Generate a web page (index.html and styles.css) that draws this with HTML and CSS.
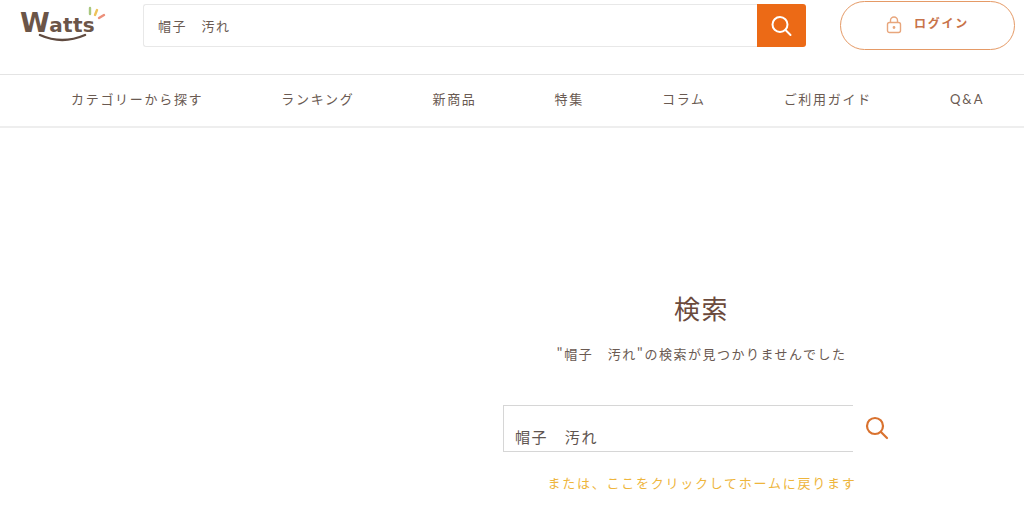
FILE: index.html
```html
<!DOCTYPE html>
<html lang="ja">
<head>
  <meta charset="UTF-8">
  <meta name="viewport" content="width=device-width, initial-scale=1.0">
  <title>検索 | Watts</title>
  <link rel="stylesheet" href="styles.css">
</head>
<body>

  <header class="header">
    <a class="logo" href="#">
      <span class="logo-text"><span class="logo-w">W</span>atts</span>
      <svg class="logo-marks" width="90" height="44" viewBox="0 0 90 44" fill="none" stroke-linecap="round">
        <path d="M20 34 Q42 44 65 34" stroke="#5f4a3f" stroke-width="2.4"/>
        <path d="M70 7 L70 13" stroke="#a9c77e" stroke-width="2.4"/>
        <path d="M77 9 L75 14" stroke="#eec35a" stroke-width="2.4"/>
        <path d="M84 14 L79 17" stroke="#ec8f7a" stroke-width="2.4"/>
      </svg>
    </a>
    <form class="search-bar">
      <input class="search-bar-input" type="text" value="帽子　汚れ">
      <button class="search-bar-btn" type="button">
        <svg width="22" height="22" viewBox="0 0 22 22" fill="none" stroke="#fff" stroke-width="2" stroke-linecap="round">
          <circle cx="9" cy="9.500" r="7.500"/>
          <path d="M14.500 15 L19.500 20"/>
        </svg>
      </button>
    </form>
    <a class="login" href="#">
      <svg class="login-icon" width="16" height="18" viewBox="0 0 16 18" fill="none" stroke="#e8a67c" stroke-width="1.400">
        <rect x="1.500" y="6.500" width="13" height="10" rx="2"/>
        <path d="M4.500 6.500 V4.500 a3.500 3.500 0 0 1 7 0 V6.500"/>
        <circle cx="8" cy="11.500" r="0.700" fill="#e8a67c"/>
      </svg>
      <span class="login-text">ログイン</span>
    </a>
  </header>

  <nav class="nav">
    <a href="#">カテゴリーから探す</a>
    <a href="#">ランキング</a>
    <a href="#">新商品</a>
    <a href="#">特集</a>
    <a href="#">コラム</a>
    <a href="#">ご利用ガイド</a>
    <a class="nav-qa" href="#">Q&amp;A</a>
  </nav>

  <main class="main">
    <section class="result">
      <h1>検索</h1>
      <p class="message">"帽子　汚れ"の検索が見つかりませんでした</p>
      <form class="result-form">
        <input class="result-input" type="text" value="帽子　汚れ">
        <svg class="result-icon" width="24" height="24" viewBox="0 0 24 24" fill="none" stroke="#d9722f" stroke-width="2.200" stroke-linecap="round">
          <circle cx="10" cy="10" r="8"/>
          <path d="M16 16 L22 22"/>
        </svg>
      </form>
      <a class="home-link" href="#">または、ここをクリックしてホームに戻ります</a>
    </section>
  </main>

</body>
</html>
```

FILE: styles.css
```css
* {
  box-sizing: border-box;
}

body {
  margin: 0;
  background: #fff;
  color: #6a5a52;
  font-family: "Noto Sans CJK JP", "Noto Sans", sans-serif;
  font-size: 13px;
}

a {
  color: inherit;
  text-decoration: none;
}

.header {
  display: flex;
  height: 75px;
  padding: 1px 9px 0 20px;
  border-bottom: 1px solid #e4e4e4;
}

.logo {
  position: relative;
  width: 123px;
}

.logo-text {
  display: block;
  margin-top: 3px;
  font-family: "DejaVu Sans", sans-serif;
  font-size: 20px;
  font-weight: 700;
  line-height: 38px;
  letter-spacing: 0.300px;
  color: #6b5548;
}

.logo-w {
  font-size: 27px;
  letter-spacing: -0.500px;
}

.logo-marks {
  position: absolute;
  top: 0;
  left: 0;
}

.search-bar {
  display: flex;
  width: 663px;
  height: 43px;
  margin-top: 3px;
}

.search-bar-input {
  flex: 1;
  padding: 0 14px;
  border: 1px solid #e8e8e8;
  border-right: none;
  border-radius: 3px 0 0 3px;
  outline: none;
  color: #6a5a52;
  font: inherit;
  letter-spacing: 1.500px;
}

.search-bar-btn {
  display: flex;
  align-items: center;
  justify-content: center;
  width: 49px;
  padding: 0;
  border: none;
  border-radius: 0 3px 3px 0;
  background: #ec6a16;
}

.login {
  display: flex;
  align-items: center;
  justify-content: center;
  gap: 12px;
  width: 175px;
  height: 49px;
  margin-left: 34px;
  border: 1.500px solid #e59a66;
  border-radius: 25px;
  color: #c8734a;
  font-size: 12px;
  font-weight: 700;
  letter-spacing: 1.800px;
}

.login-icon {
  margin-bottom: 1px;
}

.login-text {
  margin-bottom: 6px;
}

.nav {
  display: flex;
  gap: 78px;
  height: 53px;
  padding: 0 0 4px 71px;
  align-items: center;
  border-bottom: 2px solid #eeeeee;
  white-space: nowrap;
  letter-spacing: 1.700px;
}

.nav-qa {
  letter-spacing: 2px;
  font-family: "Lato", sans-serif;
}

.main {
  padding: 161px 0 0 503px;
}

.result {
  width: 397px;
  text-align: center;
}

.result h1 {
  margin: 0;
  color: #6b4a3c;
  font-size: 26px;
  font-weight: 400;
  line-height: 38px;
  letter-spacing: 1.400px;
}

.message {
  margin: 17px 0 0;
  line-height: 19px;
  letter-spacing: 1.500px;
}

.result-form {
  display: flex;
  align-items: center;
  margin-top: 42px;
}

.result-input {
  width: 350px;
  height: 47px;
  padding: 16px 11px 0;
  border: 1px solid #d6d6d6;
  border-right: none;
  outline: none;
  color: #5f5550;
  font: inherit;
  font-size: 15px;
  letter-spacing: 1.600px;
}

.result-icon {
  margin: 0 0 2px 12px;
}

.home-link {
  display: block;
  margin: 21px 0 0 1px;
  color: #eeb53c;
  line-height: 20px;
  letter-spacing: 1.750px;
}
```
